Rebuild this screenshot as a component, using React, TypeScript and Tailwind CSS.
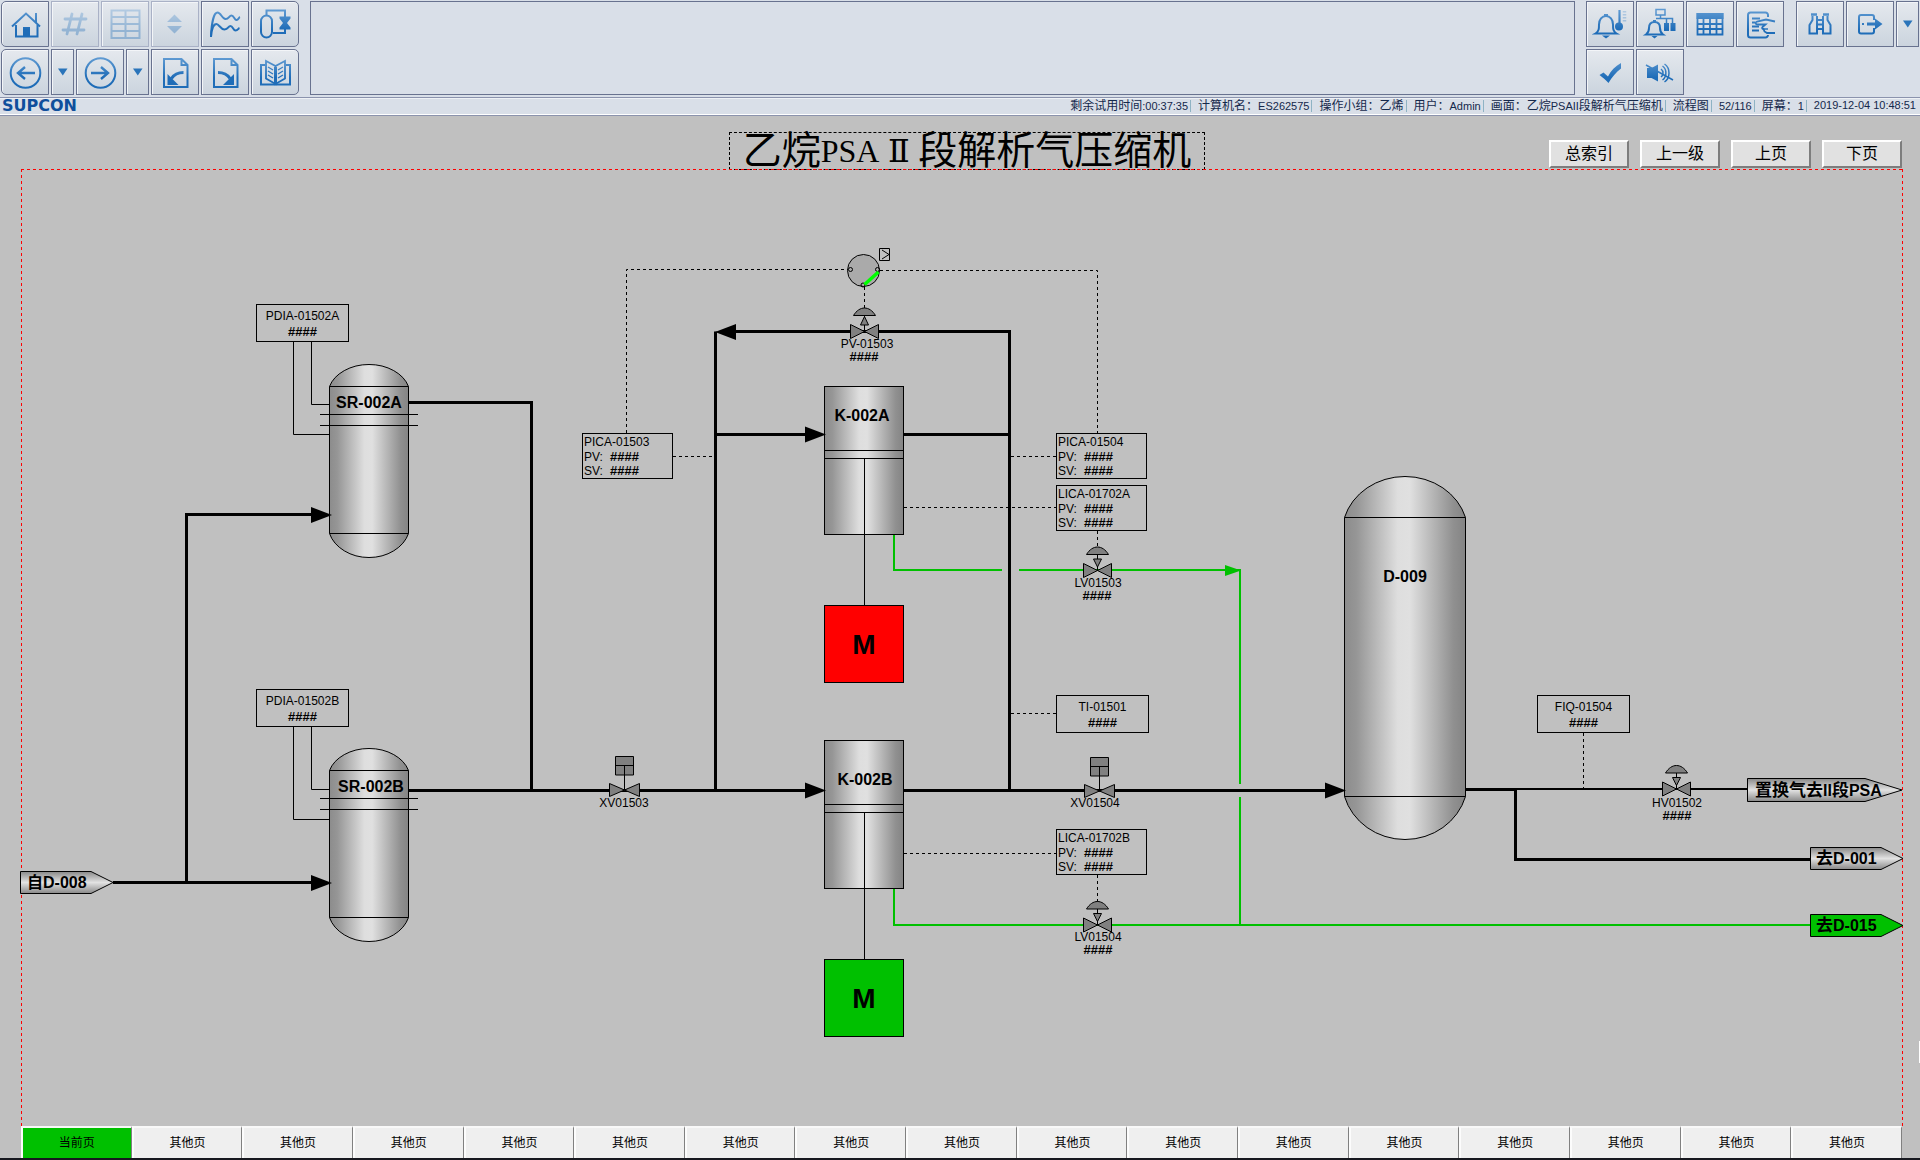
import React from "react";

const SANS = "font-['Liberation_Sans','Noto_Sans_CJK_SC',sans-serif]";

/* ---------- toolbar icons ---------- */

type IconProps = { children: React.ReactNode; faded?: boolean };

function Icon({ children, faded }: IconProps) {
  return (
    <svg
      viewBox="0 0 36 36"
      aria-hidden="true"
      className={"h-9 w-9 shrink-0 " + (faded ? "opacity-35" : "")}
      fill="none"
      stroke="url(#blue)"
      strokeWidth="2"
    >
      {children}
    </svg>
  );
}

const fill = { fill: "url(#blue)", stroke: "none" };

const HomeIcon = () => (
  <Icon>
    <path d="M5 20.5 19 7.500 33 20.500M29 7v10" strokeWidth="2" />
    <path d="M9 19v11.500h21.500V19" />
    <path d="M16 21h7v9h-7z" {...fill} />
  </Icon>
);
const HashIcon = () => (
  <Icon faded>
    <path d="M8 13h21M6 24h21M15 8l-5 20M25 8l-5 20" strokeWidth="2.8" strokeLinecap="round" />
  </Icon>
);
const SheetIcon = () => (
  <Icon faded>
    <path d="M4.500 4.500h28v27.500h-28zM18.500 4.500V32M4.500 11h28M4.500 18h28M4.500 25h28" />
  </Icon>
);
const SortIcon = () => (
  <Icon faded>
    <path d="M10 16h15l-7.500-7.500zM10 20h15l-7.500 7.500z" {...fill} />
  </Icon>
);
const TrendIcon = () => (
  <Icon>
    <path d="M4 31C4.500 17 7 6.500 10.500 6.500S15 13 18.500 13s3.500-3.500 6-3.500 3 4.500 5 4.500 2-2.500 3.500-3" />
    <path d="M4 31c.5-9 3-13 5.500-13s4 5.500 8 5.500 3.500-3.500 6-3.500 2.500 4.500 5 4.500 2.500-2 4-2.500" />
  </Icon>
);
const VesselIcon = () => (
  <Icon>
    <rect x="4" y="9.500" width="11" height="22" rx="5.500" />
    <path d="M9.500 9V4.500H28V11M28 23v4H16" />
    <path d="M22.500 10.500h11v2L30 17l3.500 4.500v2h-11v-2L26 17l-3.500-4.500z" {...fill} />
  </Icon>
);
const BackIcon = () => (
  <Icon>
    <circle cx="18.500" cy="19" r="14.800" />
    <path d="M28 19H11M18 13l-7 6 7 6" strokeWidth="2.400" />
  </Icon>
);
const ForwardIcon = () => (
  <Icon>
    <circle cx="18.500" cy="19" r="14.800" />
    <path d="M9 19h17M19 13l7 6-7 6" strokeWidth="2.400" />
  </Icon>
);
const PagePrevIcon = () => (
  <Icon>
    <path d="M7 5h17.500l6 6v22H7zM24.500 5v6h6" />
    <path d="M26.500 18.500c-6 0-9.500 2-12 6" strokeWidth="3" />
    <path d="M10.500 20v11h11z" {...fill} />
  </Icon>
);
const PageNextIcon = () => (
  <Icon>
    <path d="M7 5h17.500l6 6v22H7zM24.500 5v6h6" />
    <path d="M11 18.500c6 0 9.500 2 12 6" strokeWidth="3" />
    <path d="M27 20v11H16z" {...fill} />
  </Icon>
);
const BookIcon = () => (
  <Icon>
    <path d="M8 11H4v19.500h29V11h-4" />
    <path d="M18.500 12v18L9 24.500V7zM18.500 12v18l9.500-5.500V7z" strokeWidth="1.800" />
    <path d="M11 13l5 3M11 17l5 3M11 21l5 3M26 13l-5 3M26 17l-5 3M26 21l-5 3" strokeWidth="1.400" />
    <path d="M17 13h3v16h-3z" {...fill} />
  </Icon>
);
const BellTempIcon = () => (
  <Icon>
    <path d="M3.500 27.500c3.500-2 3.500-5 3.500-9 0-5 3-8.500 7-8.500s7 3.500 7 8.500c0 4 0 7 3.500 9z" />
    <path d="M12 8h4v2h-4zM10 29.500h8l-4 3z" {...fill} />
    <path d="M27.500 4v16" strokeWidth="2.200" />
    <circle cx="27" cy="20.500" r="4" {...fill} />
    <path d="M32.500 5v12" strokeWidth="3.500" strokeDasharray="1.500 1.500" opacity=".35" />
  </Icon>
);
const BellNetIcon = () => (
  <Icon>
    <path d="M4 28.500c3-2 3-4 3-6.500 0-3.500 2-6 5.500-6s5.500 2.500 5.500 6c0 2.500 0 4.500 3 6.500z" />
    <path d="M11 14h3v2h-3zM9.500 30h6l-3 2.500z" {...fill} />
    <path d="M14 3.500h9V9h-9zM18.500 9v3.500M14 12.500h16.500V17M24.500 12.500V17" strokeWidth="1.500" />
    <path d="M22 17h5v8h-5zM28.500 17h5v8h-5z" {...fill} />
  </Icon>
);
const GridIcon = () => (
  <Icon>
    <path d="M4.500 7h27v6h-27z" {...fill} />
    <path d="M5.500 8h25v20.500h-25zM11.500 13v15M18 13v15M24.500 13v15M5.500 18h25M5.500 23h25" strokeWidth="1.800" />
  </Icon>
);
const FormIcon = () => (
  <Icon>
    <path d="M26 11V9a2.500 2.500 0 0 0-2.500-2.500h-15A2.500 2.500 0 0 0 6 9v20a2.500 2.500 0 0 0 2.500 2.500h15A2.500 2.500 0 0 0 26 29" />
    <path d="M10 12.500h8M10 16.500h3M10 20.500h7M10 24.500h7" />
    <path d="M33 15.500l-9-2-9 2c-2 .6-1.500 3 .5 3h8L20.500 21c-1 1.200 0 2 1 2l1 2.500 2.500 1.500h8" strokeWidth="1.800" />
    <path d="M22 23h4" strokeWidth="1.400" />
  </Icon>
);
const BinocularsIcon = () => (
  <Icon>
    <path d="M9 8.500h6M21 8.500h6" strokeWidth="2.600" />
    <path d="M10.500 10v4l-3 5v8.500h7.500V23h6v4.500h7.500V19l-3-5v-4M15 10v4h6v-4M15 14v9M21 14v9M15 18.500h6" />
  </Icon>
);
const ExitIcon = () => (
  <Icon>
    <path d="M22 14v-3a2 2 0 0 0-2-2H9a2 2 0 0 0-2 2v14.500a2 2 0 0 0 2 2h11a2 2 0 0 0 2-2V22" />
    <path d="M15 16.500h8V12.500l7.500 5.500-7.500 5.500v-4h-8z" {...fill} />
    <path d="M10 17h2v2h-2z" {...fill} />
  </Icon>
);
const CheckIcon = () => (
  <Icon>
    <path d="M7.500 21l4-2.500 4.500 4c3-6 7-10 13-13.500v5.500c-5 4-9 8.500-12.500 14.500C13.500 26 11 23.500 7.500 21z" {...fill} />
  </Icon>
);
const MuteIcon = () => (
  <Icon>
    <path d="M5 14h4.500L16 10.500v17L9.500 24H5z" {...fill} />
    <path d="M19 15a5 5 0 0 1 0 8M20.500 12c4.500 3 4.500 11 0 14M22.500 10c6 4 6 14 0 18" strokeWidth="1.500" />
    <path d="M4 11l27 15" strokeWidth="1.500" />
  </Icon>
);
const DropIcon = () => (
  <svg viewBox="0 0 10 8" aria-hidden="true" className="h-2 w-2.5 shrink-0" fill="#2a74ba">
    <path d="M0 .5h9.500L4.800 7.500z" />
  </svg>
);

/* ---------- toolbar ---------- */

type ToolProps = { label: string; icon: React.ReactNode; narrow?: boolean; disabled?: boolean; round?: string };

function Tool({ label, icon, narrow, disabled, round = "" }: ToolProps) {
  return (
    <button
      type="button"
      aria-label={label}
      disabled={disabled}
      className={
        "flex h-[46px] items-center justify-center border bg-linear-to-b from-[#e5e9ee] to-[#cbd4de] shadow-[inset_1px_1px_0_#f3f5f8] " +
        (narrow ? "w-[23px] " : "w-12 ") +
        (disabled ? "border-[#a9b1c6] " : "border-[#68728f] ") +
        round
      }
    >
      {icon}
    </button>
  );
}

function Toolbar() {
  return (
    <header className="flex gap-[11px] bg-[#d9dfe8] pt-px pb-0.5 pl-px">
      <div className="flex shrink-0 flex-col gap-0.5">
        <div className="flex gap-0.5">
          <Tool label="主页" icon={<HomeIcon />} round="rounded-l-[5px]" />
          <Tool label="位号" icon={<HashIcon />} disabled />
          <Tool label="表格" icon={<SheetIcon />} disabled />
          <Tool label="翻页" icon={<SortIcon />} disabled />
          <Tool label="趋势" icon={<TrendIcon />} />
          <Tool label="流程图" icon={<VesselIcon />} round="rounded-r-[5px]" />
        </div>
        <div className="flex gap-0.5">
          <Tool label="后退" icon={<BackIcon />} round="rounded-l-[5px]" />
          <Tool label="后退列表" icon={<DropIcon />} narrow />
          <Tool label="前进" icon={<ForwardIcon />} />
          <Tool label="前进列表" icon={<DropIcon />} narrow />
          <Tool label="前页" icon={<PagePrevIcon />} />
          <Tool label="后页" icon={<PageNextIcon />} />
          <Tool label="手册" icon={<BookIcon />} round="rounded-r-[5px]" />
        </div>
      </div>
      <div className="flex-1 border border-[#68728f]" />
      <div className="flex shrink-0 flex-col gap-0.5">
        <div className="flex gap-0.5">
          <Tool label="过程报警" icon={<BellTempIcon />} />
          <Tool label="系统报警" icon={<BellNetIcon />} />
          <Tool label="报表" icon={<GridIcon />} />
          <Tool label="操作记录" icon={<FormIcon />} />
          <div className="w-2" />
          <Tool label="查找" icon={<BinocularsIcon />} />
          <Tool label="退出" icon={<ExitIcon />} />
          <div className="-mr-px">
            <Tool label="更多" icon={<DropIcon />} narrow />
          </div>
          <span className="w-0" />
        </div>
        <div className="flex gap-0.5">
          <Tool label="确认" icon={<CheckIcon />} />
          <Tool label="静音" icon={<MuteIcon />} />
        </div>
      </div>
    </header>
  );
}

const STATUS: [string, string][] = [
  ["剩余试用时间", ":00:37:35"],
  ["计算机名：", "ES262575"],
  ["操作小组：乙烯", ""],
  ["用户：", "Admin"],
];

function StatusBar() {
  const item = "flex items-baseline border-r border-[#8fb3c4] pr-0.5 leading-3";
  return (
    <div className="flex h-[19px] items-center justify-between border-t border-b border-[#8b93ad] bg-[#d9dfe8] pr-1 pb-0.5 pl-0.5 shadow-[inset_0_-1px_0_#fff,inset_0_1px_0_#eef1f5]">
      <span className="font-['DejaVu_Sans',sans-serif] text-[16px] leading-4 font-bold text-[#0f4f9c]">SUPCON</span>
      <div className="flex items-center gap-[7px] text-[11px] whitespace-nowrap text-[#14284b]">
        {STATUS.map(([name, value]) => (
          <span key={name} className={item}>
            <span className="text-[12px]">{name}</span>
            {value}
          </span>
        ))}
        <span className={item}>
          <span className="text-[12px]">画面：乙烷</span>PSAII<span className="text-[12px]">段解析气压缩机</span>
        </span>
        <span className={item}>
          <span className="text-[12px]">流程图</span>
        </span>
        <span className={item}>52/116</span>
        <span className={item}>
          <span className="text-[12px]">屏幕：</span>1
        </span>
        <span>2019-12-04 10:48:51</span>
      </div>
    </div>
  );
}

/* ---------- title row ---------- */

function TitleRow() {
  return (
    <div className="grid h-[53px] grid-cols-[1fr_auto_1fr] items-end pr-[18px] pl-8">
      <span />
      <h1 className="-mb-px flex h-[38px] items-center border border-dashed border-black px-[13px] text-[39px] leading-9 font-normal whitespace-nowrap text-black">
        乙烷
        <span className="font-['Liberation_Serif',serif] text-[32px]">PSA</span>
        <span className="w-[39px] text-center font-['DejaVu_Serif',serif] text-[32px]">Ⅱ</span>
        段解析气压缩机
      </h1>
      <nav className="flex justify-end gap-[11px] pb-px">
        {["总索引", "上一级", "上页", "下页"].map((t) => (
          <button
            key={t}
            type="button"
            className="h-7 w-20 border-2 border-t-white border-r-[#7d7d7d] border-b-[#7d7d7d] border-l-white bg-[#e1e1e1] text-[16px] leading-6 text-black"
          >
            {t}
          </button>
        ))}
      </nav>
    </div>
  );
}

/* ---------- process diagram ---------- */

type XY = { x: number; y: number };

function Label({ x, y, children }: XY & { children: React.ReactNode }) {
  return (
    <text x={x} y={y} textAnchor="middle" className="text-[12px]">
      {children}
    </text>
  );
}

function Hash({ x, y, start }: XY & { start?: boolean }) {
  return (
    <text x={x} y={y} textAnchor={start ? "start" : "middle"} className="text-[13px] font-bold">
      ####
    </text>
  );
}

function Name({ x, y, children }: XY & { children: React.ReactNode }) {
  return (
    <text x={x} y={y} textAnchor="middle" className="text-[16px] font-bold">
      {children}
    </text>
  );
}

function Indicator({ x, y, tag }: XY & { tag: string }) {
  return (
    <g>
      <rect x={x} y={y} width="92" height="37" fill="none" stroke="#000" />
      <Label x={x + 46} y={y + 15.5}>{tag}</Label>
      <Hash x={x + 46} y={y + 31.5} />
    </g>
  );
}

function Controller({ x, y, tag }: XY & { tag: string }) {
  return (
    <g className="text-[12px]">
      <rect x={x} y={y} width="90" height="45" fill="none" stroke="#000" />
      <text x={x + 1.5} y={y + 12.5}>{tag}</text>
      <text x={x + 1.5} y={y + 27.5}>PV:</text>
      <text x={x + 1.5} y={y + 41.5}>SV:</text>
      <Hash x={x + 27.5} y={y + 27.5} start />
      <Hash x={x + 27.5} y={y + 41.5} start />
    </g>
  );
}

function ControlValve({ x, y, up }: XY & { up?: boolean }) {
  return (
    <g transform={`translate(${x} ${y})`} fill="#808080" stroke="#000">
      <path d="M-14-7V7L14-7V7z" />
      <path d="M0 0v-16" />
      <path d={up ? "M-4-6.500H4L0-15z" : "M-4-11.500H4L0-3.500z"} />
      <path d="M-11-16H11C8-21 4-23.500 0-23.500S-8-21-11-16z" />
    </g>
  );
}

function SwitchValve({ x, y }: XY) {
  return (
    <g transform={`translate(${x} ${y})`} fill="#808080" stroke="#000">
      <path d="M-15-6.500V6.500L15-6.500V6.500z" />
      <path d="M-9-33.500H9V-15H-9zM-9-24.500H9M0-24.500V0" />
    </g>
  );
}

type TankProps = { l: number; r: number; top: number; y1: number; y2: number; bottom: number };

// The heads are ellipse caps slightly wider than the shell, which gives the small shoulder at each seam.
const HEAD = 1.04;
const CAP = 1 - Math.sqrt(1 - 1 / (HEAD * HEAD));

function Tank({ l, r, top, y1, y2, bottom }: TankProps) {
  const rx = ((r - l) / 2) * HEAD;
  const ryTop = (y1 - top) / CAP;
  const ryBottom = (bottom - y2) / CAP;
  return (
    <g stroke="#000" fill="url(#metal)">
      <path d={`M${l} ${y1}A${rx} ${ryTop} 0 0 1 ${r} ${y1}V${y2}A${rx} ${ryBottom} 0 0 1 ${l} ${y2}z`} />
      <path d={`M${l} ${y1}H${r}M${l} ${y2}H${r}`} />
    </g>
  );
}

function Filter({ y }: { y: number }) {
  return (
    <g transform={`translate(0 ${y})`}>
      <Tank l={329.5} r={408.5} top={364.5} y1={386.5} y2={533.5} bottom={557.5} />
      <path d="M320 414.500h98M320 425.500h98" stroke="#000" />
    </g>
  );
}

function Compressor({ y, motor }: { y: number; motor: string }) {
  return (
    <g transform={`translate(0 ${y})`} stroke="#000">
      <rect x="824.500" y="386.500" width="79" height="148" fill="url(#metal)" />
      <path d="M825 450.500h78M825 458.500h78M864.500 458.500V605" />
      <rect x="824.500" y="605.500" width="79" height="77" fill={motor} />
      <text x="864" y="653.500" textAnchor="middle" stroke="none" className="text-[28px] font-bold">
        M
      </text>
    </g>
  );
}

function RightArrow({ x, y }: XY) {
  return <path d={`M${x} ${y}l-21-8v16z`} fill="#000" />;
}

function Diagram() {
  return (
    <svg viewBox="0 169 1920 957" className="block w-full" role="img" aria-label="乙烷PSAⅡ段解析气压缩机流程图">
      <defs>
        <linearGradient id="metal">
          <stop offset="0" stopColor="#8c8c8c" />
          <stop offset=".1" stopColor="#969696" />
          <stop offset=".44" stopColor="#dedede" />
          <stop offset=".54" stopColor="#e0e0e0" />
          <stop offset=".9" stopColor="#909090" />
          <stop offset="1" stopColor="#848484" />
        </linearGradient>
        <linearGradient id="tag" x1="0" x2="0" y1="0" y2="1">
          <stop offset="0" stopColor="#888" />
          <stop offset=".5" stopColor="#e2e2e2" />
          <stop offset="1" stopColor="#888" />
        </linearGradient>
      </defs>

      {/* sheet frame */}
      <path d="M21 169.500H1902M21.500 169V1126M1902.500 169V1126" stroke="#ff0000" strokeDasharray="3 3" />
      <path d="M1919.500 1041v22" stroke="#fff" />

      {/* signal lines */}
      <g fill="none" stroke="#000" strokeDasharray="3 3">
        <path d="M626.500 433V269.500H848M880 270.500H1097.500V433M864.500 287v21" />
        <path d="M673 456.500h40M1011 456.500h45M904 507.500h152M904 853.500h152M1011 713.500h45" />
        <path d="M1097.500 531v16M1097.500 875v27M1583.500 733v55" />
      </g>

      {/* process pipes */}
      <g fill="none" stroke="#000" strokeWidth="3">
        <path d="M113 882.500H312M186.500 882V514.500H312" />
        <path d="M408 402.500H531.500V790M408 790.500H806M715.500 790V331.500M734 331.500H1009.500V790M716 434.500H806M904 434.500H1010" />
        <path d="M904 790.500H1326M1466 789.500H1516M1515.500 788V859.500H1810" />
      </g>
      <path d="M1516 789H1748" stroke="#000" strokeWidth="2" />
      <path d="M293.500 342V434.500H329M311.500 342V404.500H329M293.500 727V819.500H329M311.500 727V789.500H329" fill="none" stroke="#000" />

      {/* condensate pipes */}
      <g fill="none" stroke="#00c000" strokeWidth="2">
        <path d="M894 534V570H1002M1019 570H1240V784M1240 797V925M894 889V925H1810" />
        <path d="M1241 570.500l-16-5.500v11z" fill="#00c000" stroke="none" />
      </g>

      {/* equipment */}
      <Filter y={0} />
      <Filter y={384} />
      <Compressor y={0} motor="#ff0000" />
      <Compressor y={354} motor="#00c000" />
      <Tank l={1344.5} r={1465.5} top={476.5} y1={517.5} y2={796.5} bottom={839.5} />

      <RightArrow x={332} y={515} />
      <RightArrow x={332} y={883} />
      <RightArrow x={826} y={434.5} />
      <RightArrow x={826} y={790.5} />
      <RightArrow x={1346} y={790.5} />
      <path d="M715 332l21-8v16z" fill="#000" />

      <Name x={369} y={408}>SR-002A</Name>
      <Name x={371} y={792}>SR-002B</Name>
      <Name x={862} y={421}>K-002A</Name>
      <Name x={865} y={785}>K-002B</Name>
      <Name x={1405} y={582}>D-009</Name>

      {/* selector */}
      <g stroke="#000" fill="none">
        <circle cx="863.500" cy="270.500" r="16" fill="#aaa" />
        <circle cx="850.500" cy="269.500" r="2" />
        <circle cx="877.500" cy="269.500" r="2" />
        <circle cx="863" cy="285" r="2" />
        <path d="M879.500 248.500h10v12h-10zM882 250l7 4.500-7 4.500" />
        <path d="M864.500 284.500l14-12.500" stroke="#00ff00" strokeWidth="3.500" />
      </g>

      {/* valves */}
      <ControlValve x={864.5} y={331.5} up />
      <ControlValve x={1097.5} y={570.5} />
      <ControlValve x={1097.5} y={925} />
      <ControlValve x={1676.5} y={789} />
      <SwitchValve x={624.5} y={790} />
      <SwitchValve x={1099.5} y={791} />

      <Label x={867} y={348}>PV-01503</Label>
      <Hash x={864} y={361} />
      <Label x={1098} y={587}>LV01503</Label>
      <Hash x={1097} y={600} />
      <Label x={1098} y={941}>LV01504</Label>
      <Hash x={1098} y={954} />
      <Label x={1677} y={807}>HV01502</Label>
      <Hash x={1677} y={820} />
      <Label x={624} y={807}>XV01503</Label>
      <Label x={1095} y={807}>XV01504</Label>

      {/* instruments */}
      <Indicator x={256.5} y={304.5} tag="PDIA-01502A" />
      <Indicator x={256.5} y={689.5} tag="PDIA-01502B" />
      <Indicator x={1056.5} y={695.5} tag="TI-01501" />
      <Indicator x={1537.5} y={695.5} tag="FIQ-01504" />
      <Controller x={582.5} y={433.5} tag="PICA-01503" />
      <Controller x={1056.5} y={433.5} tag="PICA-01504" />
      <Controller x={1056.5} y={485.5} tag="LICA-01702A" />
      <Controller x={1056.5} y={829.5} tag="LICA-01702B" />

      {/* off-page connectors */}
      <g stroke="#000" fill="url(#tag)">
        <path d="M20.500 871.500H91L113 882.500 91 893.500H20.500z" />
        <path d="M1747.500 778.500H1865L1902 790 1865 801.500H1747.500z" />
        <path d="M1810.500 847.500H1881L1903 858.500 1881 869.500H1810.500z" />
        <path d="M1810.500 914.500H1881L1903 925.500 1881 936.500H1810.500z" fill="#00c000" />
      </g>
      <g className="text-[16px] font-bold">
        <text x="27" y="888">自D-008</text>
        <text x="1755" y="796">
          <tspan className="text-[17px]">置换气去</tspan>II<tspan className="text-[17px]">段</tspan>PSA
        </text>
        <text x="1816" y="864">
          <tspan className="text-[17px]">去</tspan>D-001
        </text>
        <text x="1816" y="931">
          <tspan className="text-[17px]">去</tspan>D-015
        </text>
      </g>
    </svg>
  );
}

/* ---------- page tabs ---------- */

function PageTabs() {
  return (
    <nav className="flex border-b-2 border-[#17181f] pr-[18px] pl-[21px]">
      {Array.from({ length: 17 }, (_, i) => (
        <button
          key={i}
          type="button"
          className={
            "h-8 flex-1 border-t-2 border-r border-l-2 border-t-[#f8f8f8] border-r-[#808080] border-l-[#fcfcfc] text-[12px] leading-4 text-black " +
            (i === 0 ? "bg-[#00c000]" : "bg-[#efefef]")
          }
        >
          {i === 0 ? "当前页" : "其他页"}
        </button>
      ))}
    </nav>
  );
}

export default function App() {
  return (
    <div lang="zh-CN" className={"min-h-screen bg-[#c0c0c0] " + SANS}>
      <svg className="absolute h-0 w-0" aria-hidden="true">
        <linearGradient id="blue" gradientUnits="userSpaceOnUse" x1="0" y1="4" x2="0" y2="32">
          <stop offset="0" stopColor="#5f9ad2" />
          <stop offset=".7" stopColor="#1f6db8" />
          <stop offset="1" stopColor="#1f6db8" />
        </linearGradient>
      </svg>
      <Toolbar />
      <StatusBar />
      <main>
        <TitleRow />
        <Diagram />
      </main>
      <PageTabs />
    </div>
  );
}
